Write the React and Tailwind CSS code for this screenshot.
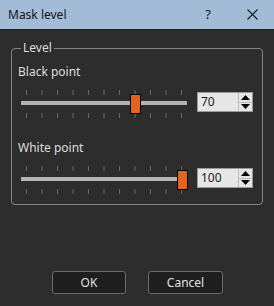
import { useState } from 'react';

const TICKS = Array.from({ length: 11 }, (_, i) => 5.5 + i * 15.5);

function Slider({ value }) {
  const left = Math.round(value * 1.55 + 0.5);
  return (
    <div className="relative w-[166px] h-[28px] shrink-0">
      <svg width="166" height="28" className="absolute left-0 top-0">
        {TICKS.map((x) => (
          <g key={x} stroke="#6a6a6a" strokeWidth="1">
            <line x1={x} y1="0" x2={x} y2="5" />
            <line x1={x} y1="23" x2={x} y2="28" />
          </g>
        ))}
        <rect x="0" y="11" width="166" height="4" fill="#b4b4b4" />
      </svg>
      <div
        className="absolute top-[4px] w-[11px] h-[20px] bg-[#e2631f] border border-black"
        style={{ left }}
      />
    </div>
  );
}

function SpinBox({ value }) {
  return (
    <div className="mt-[2px] flex w-[56px] h-[20px] border border-[#9a9a9a] bg-[#e6e6e6]">
      <div className="flex-1 pl-[3px] text-[12px] leading-[18px] text-[#1a1a1a]">{value}</div>
      <div className="flex flex-col w-[14px] border-l border-[#bdbdbd]">
        <div className="flex-1 flex items-center justify-center border-b border-[#bdbdbd]">
          <svg width="9" height="5"><polygon points="0,5 4.5,0 9,5" fill="#000" /></svg>
        </div>
        <div className="flex-1 flex items-center justify-center">
          <svg width="9" height="5"><polygon points="0,0 9,0 4.5,5" fill="#000" /></svg>
        </div>
      </div>
    </div>
  );
}

export default function App() {
  const [black] = useState(70);
  const [white] = useState(100);

  return (
    <div className="w-[274px] h-[306px] flex flex-col bg-[#2d2d2d] text-[#dedede] text-[12px] font-['Noto_Sans',sans-serif] overflow-hidden">
      {/* Title bar */}
      <div className="h-[30px] shrink-0 flex items-center bg-[#a2bbd6] text-[#141414] border-b border-[#1f1f1f]">
        <span className="ml-[8px] text-[12px]">Mask level</span>
        <span className="ml-auto mr-[36px] text-[13px]">?</span>
        <svg width="11" height="11" className="mr-[16px]" stroke="#1a1a1a" strokeWidth="1.1">
          <line x1="0.5" y1="0.5" x2="10.5" y2="10.5" />
          <line x1="10.5" y1="0.5" x2="0.5" y2="10.5" />
        </svg>
      </div>

      {/* Level group */}
      <fieldset className="ml-[11px] mt-[10px] w-[252px] h-[165px] border border-[#858585] rounded-[4px] px-[6px]">
        <legend className="ml-[3px] px-[2px] leading-[16px]">Level</legend>
        <div className="mt-[8px] leading-[16px]">Black point</div>
        <div className="mt-[10px] flex items-start gap-[10px] pl-[3px]">
          <Slider value={black} />
          <SpinBox value={black} />
        </div>
        <div className="mt-[22px] leading-[16px]">White point</div>
        <div className="mt-[10px] flex items-start gap-[10px] pl-[3px]">
          <Slider value={white} />
          <SpinBox value={white} />
        </div>
      </fieldset>

      {/* Buttons */}
      <div className="mt-auto mb-[12px] flex gap-[22px] pl-[52px]">
        <button className="w-[74px] h-[23px] rounded-[3px] border border-[#6b6b6b] bg-[#1f1f1f] text-[#e0e0e0]">OK</button>
        <button className="w-[75px] h-[23px] rounded-[3px] border border-[#6b6b6b] bg-[#1f1f1f] text-[#e0e0e0]">Cancel</button>
      </div>
    </div>
  );
}
